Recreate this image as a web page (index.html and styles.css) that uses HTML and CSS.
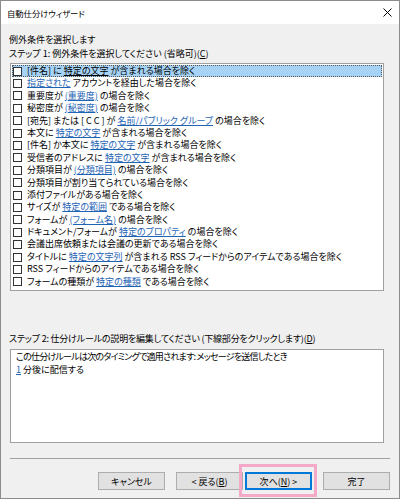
FILE: index.html
```html
<!DOCTYPE html>
<html lang="ja">
  <head>
    <meta charset="UTF-8" />
    <meta name="viewport" content="width=device-width, initial-scale=1.0" />
    <title>自動仕分けウィザード</title>
    <link rel="stylesheet" href="styles.css">
  </head>
  <body>
    <div class="window">
      <!-- Title bar -->
      <div class="titlebar">
        <span class="title">自動仕分けウィザード</span>
        <svg class="close" width="9" height="9" viewBox="0 0 9 9">
          <path d="M0.5 0.5 L8.5 8.5 M8.5 0.5 L0.5 8.5" stroke="#000" stroke-width="1" fill="none" />
        </svg>
      </div>

      <div class="content">
        <p class="label">例外条件を選択します</p>
        <p class="label">ステップ 1: 例外条件を選択してください (省略可)(<u>C</u>)</p>

        <!-- Condition list -->
        <ul class="list">
          <li class="row selected"><span class="check"></span><span class="text">[件名] に <a>特定の文字</a> が含まれる場合を除く</span></li>
          <li class="row"><span class="check"></span><span class="text"><a>指定された</a> アカウントを経由した場合を除く</span></li>
          <li class="row"><span class="check"></span><span class="text">重要度が <a>(重要度)</a> の場合を除く</span></li>
          <li class="row"><span class="check"></span><span class="text">秘密度が <a>(秘密度)</a> の場合を除く</span></li>
          <li class="row"><span class="check"></span><span class="text">[宛先] または [ C C ] が <a>名前/パブリック グループ</a> の場合を除く</span></li>
          <li class="row"><span class="check"></span><span class="text">本文に <a>特定の文字</a> が含まれる場合を除く</span></li>
          <li class="row"><span class="check"></span><span class="text">[件名] か本文に <a>特定の文字</a> が含まれる場合を除く</span></li>
          <li class="row"><span class="check"></span><span class="text">受信者のアドレスに <a>特定の文字</a> が含まれる場合を除く</span></li>
          <li class="row"><span class="check"></span><span class="text">分類項目が <a>(分類項目)</a> の場合を除く</span></li>
          <li class="row"><span class="check"></span><span class="text">分類項目が割り当てられている場合を除く</span></li>
          <li class="row"><span class="check"></span><span class="text">添付ファイルがある場合を除く</span></li>
          <li class="row"><span class="check"></span><span class="text">サイズが <a>特定の範囲</a> である場合を除く</span></li>
          <li class="row"><span class="check"></span><span class="text">フォームが <a>(フォーム名)</a> の場合を除く</span></li>
          <li class="row"><span class="check"></span><span class="text">ドキュメント/フォームが <a>特定のプロパティ</a> の場合を除く</span></li>
          <li class="row"><span class="check"></span><span class="text">会議出席依頼または会議の更新である場合を除く</span></li>
          <li class="row"><span class="check"></span><span class="text">タイトルに <a>特定の文字列</a> が含まれる RSS フィードからのアイテムである場合を除く</span></li>
          <li class="row"><span class="check"></span><span class="text">RSS フィードからのアイテムである場合を除く</span></li>
          <li class="row"><span class="check"></span><span class="text">フォームの種類が <a>特定の種類</a> である場合を除く</span></li>
        </ul>

        <p class="label step2">ステップ 2: 仕分けルールの説明を編集してください (下線部分をクリックします)(<u>D</u>)</p>

        <!-- Rule description -->
        <div class="desc">
          <div class="tight">この仕分けルールは次のタイミングで適用されます: メッセージを送信したとき</div>
          <div><a>1</a> 分後に配信する</div>
        </div>

        <div class="separator"></div>

        <!-- Buttons -->
        <div class="buttons">
          <button class="btn">キャンセル</button>
          <button class="btn back">&lt; 戻る(<u>B</u>)</button>
          <button class="btn next">次へ(<u>N</u>) &gt;<span class="mark"></span></button>
          <button class="btn finish">完了</button>
        </div>
      </div>
    </div>
  </body>
</html>
```

FILE: styles.css
```css
/* General styles */
body {
    margin: 0;
    padding: 0;
    font-family: "Noto Sans CJK JP", "Noto Sans", sans-serif;
    font-size: 9px;
    font-feature-settings: "palt";
    color: #000;
}

/* Window frame */
.window {
    width: 400px;
    height: 499px;
    box-sizing: border-box;
    border: 1px solid #8c8c8c;
    background: #f0f0f0;
    display: flex;
    flex-direction: column;
}

/* Title bar */
.titlebar {
    height: 23px;
    background: #fff;
    display: flex;
    align-items: center;
    justify-content: space-between;
    padding: 0 7px 0 6px;
}

.title {
    font-size: 8.3px;
}

.close {
    display: block;
}

/* Main area */
.content {
    padding: 9px 9px 0 8px;
    display: flex;
    flex-direction: column;
}

.label {
    margin: 0;
    line-height: 14px;
    white-space: nowrap;
}

.step2 {
    margin-top: 41px;
    letter-spacing: -0.2px;
}

u {
    text-decoration: underline;
}

a {
    color: #1f64b4;
    text-decoration: underline;
}

/* Condition list */
.list {
    list-style: none;
    margin: 2px 6px 0 1px;
    padding: 1px;
    height: 224px;
    background: #fff;
    border: 1px solid #a0a0a0;
}

.row {
    height: 12.4px;
    line-height: 12.4px;
    display: flex;
    align-items: center;
    white-space: nowrap;
    box-sizing: border-box;
    padding-left: 1px;
}

.row.selected {
    background: #a6d3f5;
    outline: 1px dotted #555;
    outline-offset: -1px;
}

.row.selected a {
    color: #000;
}

.check {
    width: 7px;
    height: 7px;
    border: 1px solid #333;
    background: #fff;
    margin-right: 5px;
    flex-shrink: 0;
}

.text {
    white-space: pre;
}

/* Rule description */
.desc {
    margin: 3px 6px 0 1px;
    height: 92px;
    padding: 0 5px;
    background: #fff;
    border: 1px solid #a0a0a0;
    line-height: 13px;
    white-space: nowrap;
}

.tight {
    letter-spacing: -0.75px;
}

.separator {
    margin: 15px 0 0 1px;
    border-top: 1px solid #a0a0a0;
}

/* Buttons */
.buttons {
    display: flex;
    justify-content: flex-end;
    margin-top: 13px;
}

.btn {
    position: relative;
    width: 67px;
    height: 18px;
    padding: 0;
    font-family: inherit;
    font-size: 9px;
    font-feature-settings: "palt";
    color: #000;
    background: #e1e1e1;
    border: 1px solid #adadad;
}

.back {
    margin-left: 11px;
}

.next {
    margin-left: 2px;
    border: 2px solid #0078d7;
}

.finish {
    margin-left: 11px;
}

/* Pink highlight round the next button */
.mark {
    position: absolute;
    left: -8px;
    right: -7px;
    top: -10px;
    bottom: -9px;
    border: 3px solid #f4a9c8;
    pointer-events: none;
}
```
